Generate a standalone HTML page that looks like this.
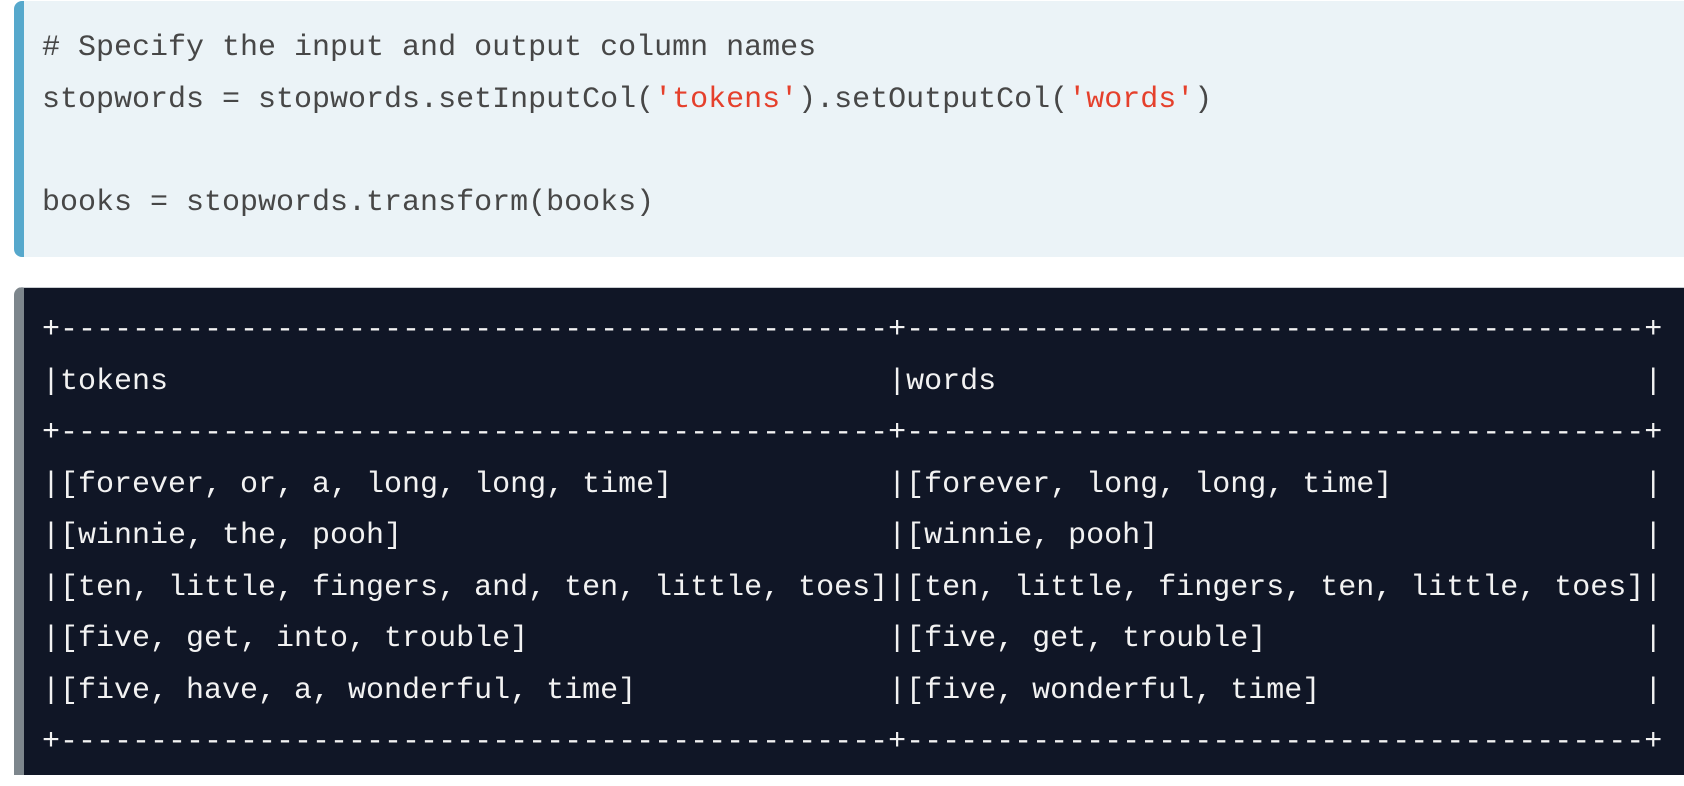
<!DOCTYPE html>
<html><head><style>
html,body{margin:0;padding:0;background:#fff;width:1684px;height:786px;overflow:hidden}
pre{margin:0;font-family:"Liberation Mono",monospace;font-size:30px;line-height:51.5px;white-space:pre}
.a{position:absolute;left:14px;top:1px;width:1670px;height:256px;background:#ebf3f7;border-left:10px solid #56a8cc;border-radius:8px 0 0 8px;box-sizing:border-box;padding:22px 0 0 18px;color:#474747}
.s{color:#e5402c}
.b{position:absolute;left:14px;top:287px;width:1670px;height:488px;background:#101626;border-left:10px solid #7d868c;border-top:1px solid #c8ccd0;border-radius:8px 0 0 0;box-sizing:border-box;padding:17px 0 0 18px;color:#f2f2f2}
</style></head><body>
<div class="a"><pre># Specify the input and output column names
stopwords = stopwords.setInputCol(<span class="s">'tokens'</span>).setOutputCol(<span class="s">'words'</span>)

books = stopwords.transform(books)</pre></div>
<div class="b"><pre>+----------------------------------------------+-----------------------------------------+
|tokens                                        |words                                    |
+----------------------------------------------+-----------------------------------------+
|[forever, or, a, long, long, time]            |[forever, long, long, time]              |
|[winnie, the, pooh]                           |[winnie, pooh]                           |
|[ten, little, fingers, and, ten, little, toes]|[ten, little, fingers, ten, little, toes]|
|[five, get, into, trouble]                    |[five, get, trouble]                     |
|[five, have, a, wonderful, time]              |[five, wonderful, time]                  |
+----------------------------------------------+-----------------------------------------+</pre></div>
</body></html>
